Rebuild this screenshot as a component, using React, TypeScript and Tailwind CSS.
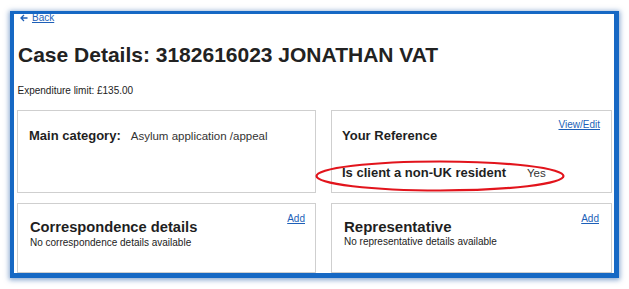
export default function App() {
  return (
    <div className="w-[629px] h-[289px] bg-white overflow-hidden font-['Liberation_Sans',Arial,sans-serif] text-[#1f1f1f]">
      <div className="mt-[11px] ml-[10px] w-[609px] h-[267px] border-t-[3.5px] border-l-[4px] border-r-[5px] border-b-[5px] border-[#1668c4] shadow-[0_1px_5px_1px_rgba(20,80,160,0.5)] overflow-hidden">
        <div className="relative flex flex-col pl-[3px]">
          <a className="-mt-[2px] ml-[3px] text-[10px] leading-[12px] text-[#1d5fb8] self-start flex items-center">
            <svg width="8" height="8" viewBox="0 0 8 8" className="mr-[4px]">
              <path d="M7.5 4H1.2M4 1L1 4l3 3" fill="none" stroke="#1d5fb8" strokeWidth="1.3" />
            </svg>
            <span className="underline">Back</span>
          </a>

          <h1 className="mt-[19px] ml-[1px] text-[21px] leading-[24px] font-bold text-[#222]">
            Case Details: 3182616023 JONATHAN VAT
          </h1>

          <p className="mt-[18px] ml-[0.5px] text-[10px] leading-[12px] text-[#222]">
            Expenditure limit: £135.00
          </p>

          <div className="mt-[12.5px] grid grid-cols-[299px_281px] grid-rows-[83px_70px] gap-x-[15px] gap-y-[10px]">
            {/* Main category */}
            <div className="border border-[#cfcfcf] pt-[17.5px] pl-[11px] flex items-baseline gap-[10px]">
              <span className="text-[13px] leading-[16px] font-bold">Main category:</span>
              <span className="text-[11.5px] leading-[16px] text-[#333]">Asylum application /appeal</span>
            </div>

            {/* Your reference */}
            <div className="border border-[#cfcfcf] pt-[8.5px] pl-[10px] pr-[11px] flex flex-col">
              <div className="flex justify-between items-start">
                <span className="mt-[9px] text-[13px] leading-[16px] font-bold">Your Reference</span>
                <a className="text-[10px] leading-[12px] text-[#1d5fb8] underline">View/Edit</a>
              </div>
              <div className="mt-[21px] flex items-baseline gap-[21px]">
                <span className="text-[13px] leading-[16px] font-bold">Is client a non-UK resident</span>
                <span className="text-[11.5px] leading-[16px] text-[#333]">Yes</span>
              </div>
            </div>

            {/* Correspondence */}
            <div className="border border-[#cfcfcf] pt-[9.5px] pl-[12px] pr-[10px] flex flex-col">
              <div className="flex justify-between items-start">
                <span className="mt-[5.3px] text-[14.7px] leading-[18px] font-bold">Correspondence details</span>
                <a className="text-[10px] leading-[12px] text-[#1d5fb8] underline">Add</a>
              </div>
              <p className="mt-[0.7px] text-[10px] leading-[12px] text-[#222]">No correspondence details available</p>
            </div>

            {/* Representative */}
            <div className="border border-[#cfcfcf] pt-[9.5px] pl-[12px] pr-[12px] flex flex-col">
              <div className="flex justify-between items-start">
                <span className="mt-[5.3px] text-[15px] leading-[18px] font-bold">Representative</span>
                <a className="text-[10px] leading-[12px] text-[#1d5fb8] underline">Add</a>
              </div>
              <p className="text-[10px] leading-[12px] text-[#222]">No representative details available</p>
            </div>
          </div>

          {/* annotation ellipse */}
          <svg
            className="absolute left-[300px] top-[144.5px] pointer-events-none"
            width="252"
            height="34"
            viewBox="0 0 252 34"
          >
            <ellipse cx="126" cy="17" rx="123.5" ry="14.5" fill="none" stroke="#e2141c" strokeWidth="2.2" />
          </svg>
        </div>
      </div>
    </div>
  );
}
